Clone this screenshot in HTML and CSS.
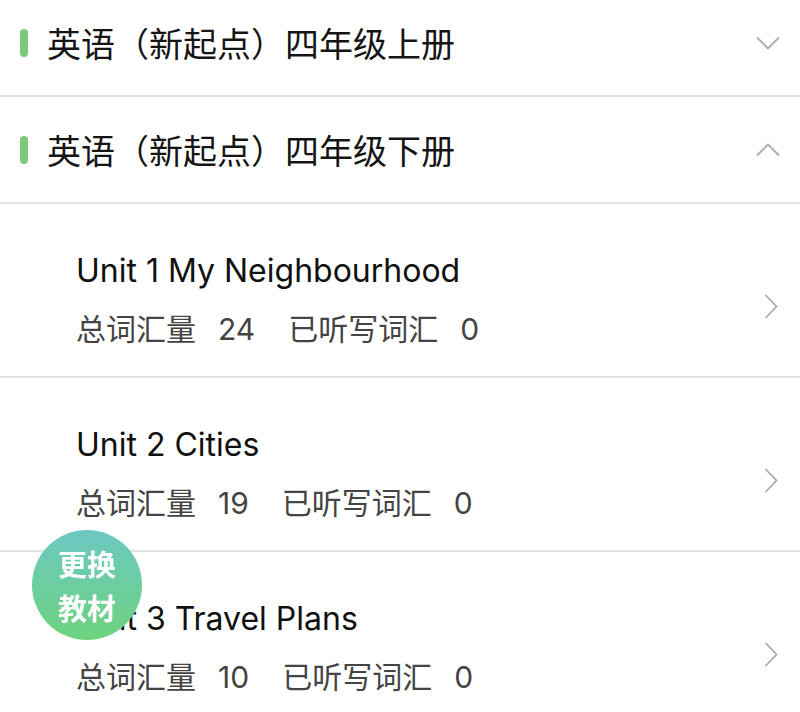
FILE: index.html
```html
<!DOCTYPE html>
<html lang="zh-CN">
<head>
<meta charset="utf-8">
<title>教材</title>
<link rel="stylesheet" href="styles.css">
</head>
<body>
<div class="page">
  <div class="book">
    <span class="mark"></span>
    <span class="book-title">英语（新起点）四年级上册</span>
    <svg class="arrow-v" width="24" height="14" viewBox="0 0 24 14"><path d="M1 1.5 L12 12.5 L23 1.5" fill="none" stroke="#aaa" stroke-width="1.8"/></svg>
  </div>
  <div class="book">
    <span class="mark"></span>
    <span class="book-title">英语（新起点）四年级下册</span>
    <svg class="arrow-v" width="24" height="14" viewBox="0 0 24 14"><path d="M1 12.5 L12 1.5 L23 12.5" fill="none" stroke="#aaa" stroke-width="1.8"/></svg>
  </div>
  <div class="unit">
    <div class="unit-body">
      <div class="unit-name">Unit 1 My Neighbourhood</div>
      <div class="unit-stat"><span>总词汇量</span><span class="num">24</span><span>已听写词汇</span><span class="num">0</span></div>
    </div>
    <svg class="arrow-r" width="14" height="25" viewBox="0 0 14 25"><path d="M1.5 1 L12.5 12.5 L1.5 24" fill="none" stroke="#aaa" stroke-width="1.8"/></svg>
  </div>
  <div class="unit">
    <div class="unit-body">
      <div class="unit-name">Unit 2 Cities</div>
      <div class="unit-stat"><span>总词汇量</span><span class="num">19</span><span>已听写词汇</span><span class="num">0</span></div>
    </div>
    <svg class="arrow-r" width="14" height="25" viewBox="0 0 14 25"><path d="M1.5 1 L12.5 12.5 L1.5 24" fill="none" stroke="#aaa" stroke-width="1.8"/></svg>
  </div>
  <div class="unit">
    <div class="unit-body">
      <div class="unit-name">Unit 3 Travel Plans</div>
      <div class="unit-stat"><span>总词汇量</span><span class="num">10</span><span>已听写词汇</span><span class="num">0</span></div>
    </div>
    <svg class="arrow-r" width="14" height="25" viewBox="0 0 14 25"><path d="M1.5 1 L12.5 12.5 L1.5 24" fill="none" stroke="#aaa" stroke-width="1.8"/></svg>
  </div>
</div>
<div class="fab">更换<br>教材</div>
</body>
</html>
```
FILE: styles.css
```css
html, body {
  margin: 0;
  padding: 0;
  background: #fff;
  overflow: hidden;
}
body {
  font-family: Inter, "Noto Sans CJK SC", sans-serif;
  color: #111;
}
.page {
  margin-top: -10px;
}
.book {
  display: flex;
  align-items: center;
  height: 105px;
  padding: 0 20px;
  border-bottom: 2px solid #e3e3e3;
}
.mark {
  width: 8px;
  height: 28px;
  border-radius: 4px;
  background: #7cc979;
  margin-right: 19px;
  flex: none;
}
.book-title {
  flex: 1;
  font-family: "Noto Sans CJK SC", sans-serif;
  font-size: 34px;
  line-height: 40px;
  color: #151515;
}
.arrow-v {
  flex: none;
}
.unit {
  display: flex;
  align-items: center;
  height: 174px;
  box-sizing: border-box;
  padding: 47px 22px 28px 76px;
  border-bottom: 2px solid #e3e3e3;
}
.unit-body {
  flex: 1;
  display: flex;
  flex-direction: column;
  gap: 16px;
}
.unit-name {
  font-size: 32px;
  line-height: 40px;
  color: #111;
}
.unit-stat {
  font-size: 30px;
  line-height: 40px;
  color: #444;
  font-family: "Noto Sans CJK SC", sans-serif;
}
.unit-stat .num {
  font-family: Inter, sans-serif;
  margin: 0 33px 0 22px;
}
.arrow-r {
  flex: none;
  margin-top: 13px;
}
.fab {
  position: fixed;
  left: 32px;
  top: 530px;
  width: 110px;
  height: 110px;
  border-radius: 50%;
  background: linear-gradient(180deg, #6dc8c3 0%, #6dd37e 100%);
  color: #fff;
  font-family: "Noto Sans CJK SC", sans-serif;
  font-weight: 700;
  font-size: 29px;
  line-height: 44px;
  text-align: center;
  display: flex;
  align-items: center;
  justify-content: center;
}
```
